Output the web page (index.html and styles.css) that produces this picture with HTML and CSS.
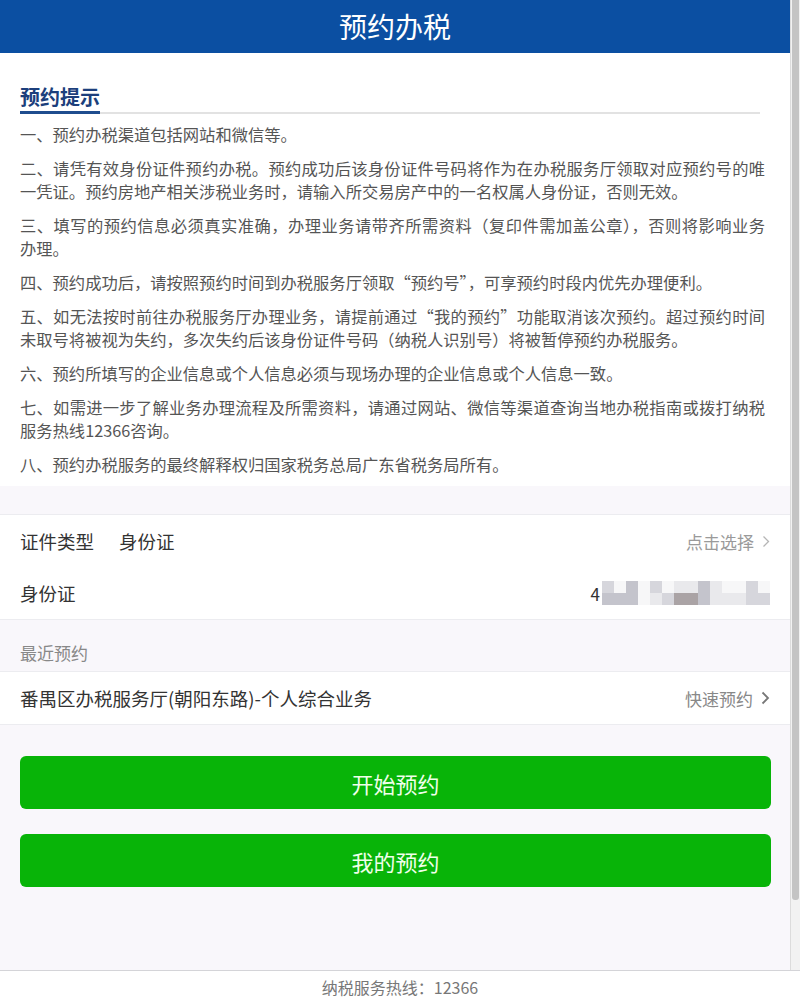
FILE: index.html
```html
<!DOCTYPE html>
<html lang="zh-CN">
<head>
    <meta charset="UTF-8">
    <meta name="viewport" content="width=device-width, initial-scale=1.0">
    <title>预约办税</title>
    <link rel="stylesheet" href="styles.css">
</head>
<body>
    <div class="page">
        <div class="main">
            <header class="topbar">预约办税</header>

            <section class="notice">
                <h2 class="notice-title"><span>预约提示</span></h2>
                <p>一、预约办税渠道包括网站和微信等。</p>
                <p>二、请凭有效身份证件预约办税。预约成功后该身份证件号码将作为在办税服务厅领取对应预约号的唯一凭证。预约房地产相关涉税业务时，请输入所交易房产中的一名权属人身份证，否则无效。</p>
                <p>三、填写的预约信息必须真实准确，办理业务请带齐所需资料（复印件需加盖公章），否则将影响业务<span class="nowrap">办理。</span></p>
                <p>四、预约成功后，请按照预约时间到办税服务厅领取“预约号”，可享预约时段内优先办理便利。</p>
                <p>五、如无法按时前往办税服务厅办理业务，请提前通过“我的预约”功能取消该次预约。超过预约时间未取号将被视为失约，多次失约后该身份证件号码（纳税人识别号）将被暂停预约办税服务。</p>
                <p>六、预约所填写的企业信息或个人信息必须与现场办理的企业信息或个人信息一致。</p>
                <p>七、如需进一步了解业务办理流程及所需资料，请通过网站、微信等渠道查询当地办税指南或拨打纳税服务热线12366咨询。</p>
                <p>八、预约办税服务的最终解释权归国家税务总局广东省税务局所有。</p>
            </section>

            <div class="list">
                <div class="row">
                    <span class="label">证件类型</span>
                    <span class="value">身份证</span>
                    <span class="action">点击选择
                        <svg class="chev" width="8" height="13" viewBox="0 0 8 13"><polyline points="1.5,1.5 6.5,6.5 1.5,11.5" fill="none" stroke="#b5b5b5" stroke-width="1.3"/></svg>
                    </span>
                </div>
                <div class="row">
                    <span class="label">身份证</span>
                    <span class="id-number">4<span class="mask">
                        <i class="m2"></i><i class="m5"></i><i class="m3"></i><i class="m5"></i><i class="m2"></i><i class="m5"></i><i class="m1"></i><i class="m1"></i><i class="m3"></i><i class="m1"></i><i class="m5"></i><i class="m5"></i><i class="m2"></i><i class="m5"></i>
                        <i class="m3"></i><i class="m3"></i><i class="m3"></i><i class="m5"></i><i class="m1"></i><i class="m2"></i><i class="m4"></i><i class="m4"></i><i class="m3"></i><i class="m1"></i><i class="m1"></i><i class="m1"></i><i class="m2"></i><i class="m2"></i>
                    </span></span>
                </div>
            </div>

            <div class="group-title">最近预约</div>

            <div class="list">
                <div class="row">
                    <span class="label">番禺区办税服务厅(朝阳东路)-个人综合业务</span>
                    <span class="action action-dark">快速预约
                        <svg class="chev" width="9" height="14" viewBox="0 0 9 14"><polyline points="1.5,1.5 7,7 1.5,12.5" fill="none" stroke="#777" stroke-width="1.8"/></svg>
                    </span>
                </div>
            </div>

            <div class="actions">
                <button class="btn">开始预约</button>
                <button class="btn">我的预约</button>
            </div>
        </div>
        <div class="scrollbar"><div class="thumb"></div></div>
    </div>
    <footer class="footer">纳税服务热线：12366</footer>
</body>
</html>
```

FILE: styles.css
```css
body {
    margin: 0;
    font-family: "Noto Sans CJK SC", "Noto Sans", sans-serif;
    background-color: #fff;
    color: #333;
}
.page {
    display: flex;
    height: 970px;
}
.main {
    width: 790px;
    display: flex;
    flex-direction: column;
    background-color: #f9f7fb;
    border-right: 1px solid #dcdcdc;
}
.scrollbar {
    flex: 1;
    background-color: #f2f2f2;
    padding: 0 1px;
}
.scrollbar .thumb {
    height: 900px;
    background-color: #c4c4c4;
    border-radius: 0 0 3px 3px;
}
.topbar {
    height: 53px;
    line-height: 53px;
    background-color: #0b4fa2;
    color: #fff;
    font-size: 28px;
    text-align: center;
}

/* notice */
.notice {
    background-color: #fff;
    padding: 30px 25px 10px 20px;
    margin-bottom: 28px;
}
.notice-title {
    margin: 0 5px 9px 0;
    font-size: 20px;
    line-height: 28px;
    font-weight: bold;
    color: #1c3f7c;
    border-bottom: 2px solid #e2e2e2;
}
.notice-title span {
    display: inline-block;
    border-bottom: 3px solid #1f4d8e;
    margin-bottom: -2px;
}
.notice p {
    margin: 0 0 11px;
    font-size: 16.3px;
    line-height: 23px;
    color: #555;
    text-align: justify;
}
.notice p:last-child {
    margin-bottom: 0;
}
.nowrap {
    white-space: nowrap;
}

/* rows */
.list {
    background-color: #fff;
    border-top: 1px solid #ececf0;
    border-bottom: 1px solid #ececf0;
}
.row {
    height: 52px;
    display: flex;
    align-items: center;
    padding: 0 20px;
    font-size: 18.5px;
}
.label {
    color: #333;
}
.value {
    margin-left: 25px;
    color: #333;
}
.action {
    margin-left: auto;
    font-size: 17px;
    color: #9a9a9a;
    display: flex;
    align-items: center;
    gap: 8px;
}
.action-dark {
    color: #888;
}
.id-number {
    margin-left: auto;
    display: flex;
    align-items: center;
    font-size: 17px;
    color: #333;
}
.mask {
    display: grid;
    grid-template-columns: repeat(14, 12px);
    grid-auto-rows: 12px;
    margin-left: 2px;
}
.mask i { display: block; }
.mask .m1 { background-color: #e9e9ec; }
.mask .m2 { background-color: #d6d6dc; }
.mask .m3 { background-color: #c4c4cc; }
.mask .m4 { background-color: #aaa3a5; }
.mask .m5 { background-color: #f7f7f8; }

.group-title {
    padding: 21px 20px 6px;
    font-size: 17px;
    line-height: 24px;
    color: #888;
}

/* buttons */
.actions {
    flex: 1;
    display: flex;
    flex-direction: column;
    gap: 25px;
    padding: 31px 19px 0 20px;
}
.btn {
    height: 53px;
    border: none;
    border-radius: 6px;
    background-color: #08b408;
    color: #efffea;
    font-family: inherit;
    font-size: 22px;
    cursor: pointer;
}

.footer {
    border-top: 1px solid #d4d4d8;
    padding-top: 5px;
    text-align: center;
    font-size: 16px;
    line-height: 22px;
    color: #777;
}
```
